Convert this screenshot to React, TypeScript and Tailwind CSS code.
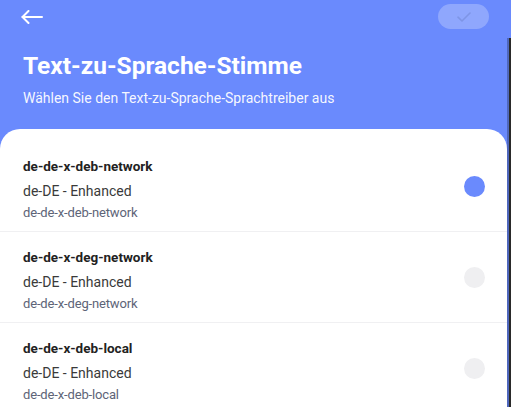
import React from 'react';

type Voice = {
  id: string;
  label: string;
  selected?: boolean;
};

const voices: Voice[] = [
  { id: 'de-de-x-deb-network', label: 'de-DE - Enhanced', selected: true },
  { id: 'de-de-x-deg-network', label: 'de-DE - Enhanced' },
  { id: 'de-de-x-deb-local', label: 'de-DE - Enhanced' },
];

const BackArrow = () => (
  <svg width="22" height="14" viewBox="0 0 22 14" fill="none" stroke="white" strokeWidth="2" strokeLinecap="round" strokeLinejoin="round">
    <path d="M21 7H1.5" />
    <path d="M7.5 1 1.5 7l6 6" />
  </svg>
);

const VoiceRow: React.FC<{ voice: Voice; last?: boolean }> = ({ voice, last }) => (
  <div className={`flex h-[91px] pl-[23px] pr-[22px] ${last ? '' : 'border-b border-[#f0f0f2]'}`}>
    <div className="flex-1 flex flex-col pt-[16px]">
      <span className="text-[13.5px] leading-[18px] font-bold text-[#222]">{voice.id}</span>
      <span className="mt-[7px] text-[14px] leading-[18px] text-[#3a3a3a]">{voice.label}</span>
      <span className="mt-[4px] text-[13px] leading-[18px] text-[#5d6477] tracking-[-0.15px]">{voice.id}</span>
    </div>
    <div className={`self-center w-[21px] h-[21px] rounded-full ${voice.selected ? 'bg-[#6a8afd]' : 'bg-[#efeff1]'}`} />
  </div>
);

export default function App() {
  return (
    <div className="relative w-[511px] h-[407px] overflow-hidden bg-[#6a8afd]" style={{ fontFamily: 'Roboto, "Noto Sans", sans-serif' }}>
      <div className="flex items-center justify-between pl-[21px] pr-[22px] pt-[4px] h-[29px]">
        <BackArrow />
        <div className="w-[51px] h-[25px] rounded-full bg-[#8fa7fd] flex items-center justify-center">
          <svg width="14" height="10" viewBox="0 0 14 10" fill="none" stroke="#7e95e6" strokeWidth="1.6" strokeLinecap="round" strokeLinejoin="round">
            <path d="M1 5.2 5 9l8-8" />
          </svg>
        </div>
      </div>
      <div className="pl-[23px] pt-[22px]">
        <h1 className="text-[24.5px] leading-[30px] font-bold text-white">Text-zu-Sprache-Stimme</h1>
        <p className="mt-[8px] text-[14px] leading-[18px] text-white/95">Wählen Sie den Text-zu-Sprache-Sprachtreiber aus</p>
      </div>
      <div className="mt-[22px] mr-[4px] bg-white rounded-t-[20px] pt-[12px] h-[400px]">
        {voices.map((v, i) => (
          <VoiceRow key={v.id + i} voice={v} last={i === voices.length - 1} />
        ))}
      </div>
      <div className="absolute right-0 top-[38px] bottom-0 w-[4px] flex">
        <div className="w-[2px] bg-black/25" />
        <div className="w-[2px] bg-[#2a2a2a]" />
      </div>
    </div>
  );
}
